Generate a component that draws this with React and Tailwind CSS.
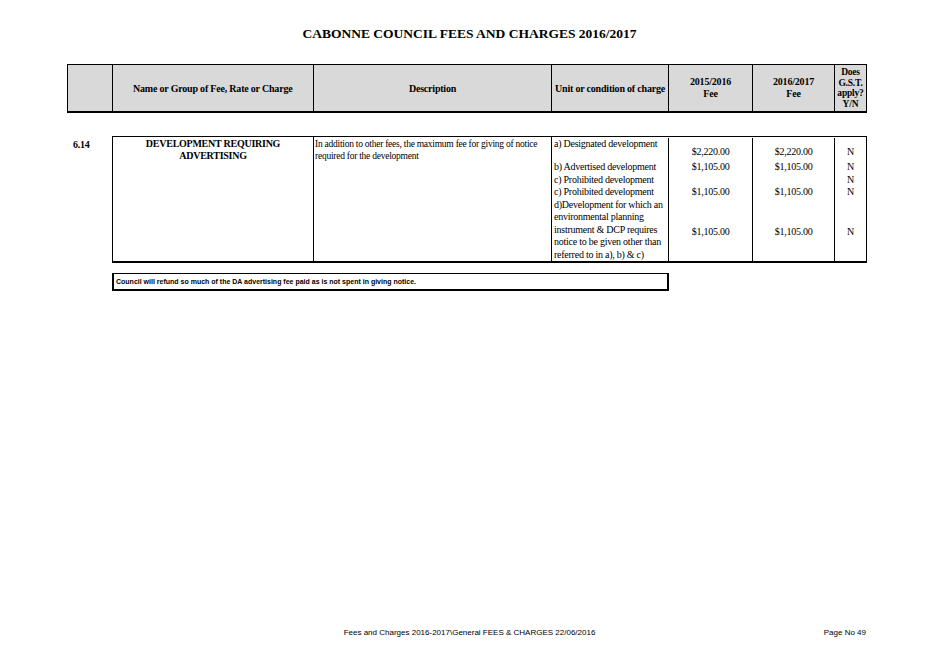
const serif = { fontFamily: '"Liberation Serif", "Times New Roman", serif' };
const sans = { fontFamily: '"Liberation Sans", Arial, sans-serif' };

export default function App() {
  return (
    <div className="w-[939px] h-[664px] bg-white text-black relative overflow-hidden" style={serif}>
      <div className="pt-[24px] text-center font-bold text-[13.5px]">CABONNE COUNCIL FEES AND CHARGES 2016/2017</div>

      <div className="ml-[67px] mt-[20px] w-[800px] h-[49px] flex bg-[#d9d9d9] border border-black border-b-2 text-[10px] font-bold whitespace-nowrap tracking-[-0.2px]">
        <div className="w-[45px] border-r border-black" />
        <div className="w-[201px] border-r border-black flex items-center pl-[20px]">Name or Group of Fee, Rate or Charge</div>
        <div className="w-[238px] border-r border-black flex items-center justify-center">Description</div>
        <div className="w-[117px] border-r border-black flex items-center justify-center">Unit or condition of charge</div>
        <div className="w-[84px] border-r border-black flex items-center justify-center text-center leading-[12px]">2015/2016<br />Fee</div>
        <div className="w-[82px] border-r border-black flex items-center justify-center text-center leading-[12px]">2016/2017<br />Fee</div>
        <div className="flex-1 flex items-center justify-center text-center leading-[10.5px] text-[9.5px]">Does<br />G.S.T.<br />apply?<br />Y/N</div>
      </div>

      <div className="flex mt-[23px] text-[10px] whitespace-nowrap tracking-[-0.25px]">
        <div className="w-[112px] pl-[73px] pt-[1px] font-bold">6.14</div>
        <div className="w-[755px] h-[127px] flex border border-black border-b-2">
          <div className="w-[201px] border-r border-black text-center font-bold leading-[12px] pt-[1px]">DEVELOPMENT REQUIRING<br />ADVERTISING</div>
          <div className="w-[238px] border-r border-black pl-[1px] leading-[12px] pt-[1px] text-[9.5px]">In addition to other fees, the maximum fee for giving of notice<br />required for the development</div>
          <div className="flex-1 flex flex-col pt-[1px]">
            <div className="flex h-[25px]">
              <div className="w-[117px] border-r border-black pl-[2px] leading-[12px]">a) Designated development</div>
              <div className="w-[84px] border-r border-black flex items-end justify-center pb-[2px]">$2,220.00</div>
              <div className="w-[82px] border-r border-black flex items-end justify-center pb-[2px]">$2,220.00</div>
              <div className="flex-1 flex items-end justify-center pb-[2px]">N</div>
            </div>
            <div className="flex-1 flex">
              <div className="w-[117px] border-r border-black pl-[2px] leading-[12.5px]">
                b) Advertised development<br />c) Prohibited development<br />c) Prohibited development<br />d)Development for which an<br />environmental planning<br />instrument &amp; DCP requires<br />notice to be given other than<br />referred to in a), b) &amp; c)
              </div>
              <div className="w-[84px] border-r border-black flex flex-col items-center leading-[12.5px]">
                <div>$1,105.00</div><div>&nbsp;</div><div>$1,105.00</div>
                <div className="mt-[27px]">$1,105.00</div>
              </div>
              <div className="w-[82px] border-r border-black flex flex-col items-center leading-[12.5px]">
                <div>$1,105.00</div><div>&nbsp;</div><div>$1,105.00</div>
                <div className="mt-[27px]">$1,105.00</div>
              </div>
              <div className="flex-1 flex flex-col items-center leading-[12.5px]">
                <div>N</div><div>N</div><div>N</div>
                <div className="mt-[27px]">N</div>
              </div>
            </div>
          </div>
        </div>
      </div>

      <div className="ml-[112px] mt-[10px] w-[557px] h-[18px] border-2 border-black border-t flex items-center pl-[2px] text-[7px] font-bold whitespace-nowrap" style={sans}>
        Council will refund so much of the DA advertising fee paid as is not spent in giving notice.
      </div>

      <div className="absolute left-0 right-0 top-[627px] text-[8px]" style={sans}>
        <div className="text-center">Fees and Charges 2016-2017\General FEES &amp; CHARGES 22/06/2016</div>
        <div className="absolute right-[73px] top-0">Page No 49</div>
      </div>
    </div>
  );
}
